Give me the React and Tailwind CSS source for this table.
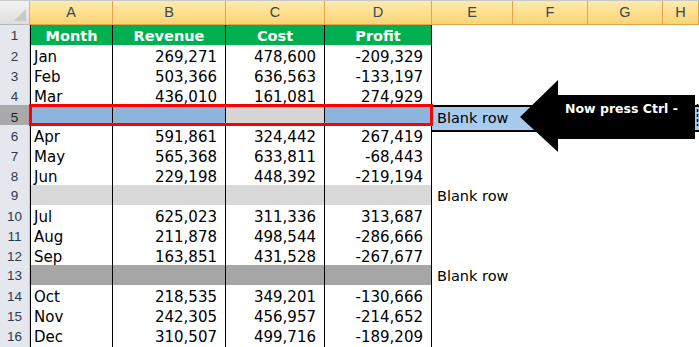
import React from "react";

const grid = "grid grid-cols-[30px_83px_113px_99px_107px_81px_75px_75px_1fr]";

const rows = [
  { n: 2, m: "Jan", r: "269,271", c: "478,600", p: "-209,329" },
  { n: 3, m: "Feb", r: "503,366", c: "636,563", p: "-133,197" },
  { n: 4, m: "Mar", r: "436,010", c: "161,081", p: "274,929" },
  { n: 5, kind: "sel" },
  { n: 6, m: "Apr", r: "591,861", c: "324,442", p: "267,419" },
  { n: 7, m: "May", r: "565,368", c: "633,811", p: "-68,443" },
  { n: 8, m: "Jun", r: "229,198", c: "448,392", p: "-219,194" },
  { n: 9, kind: "gray" },
  { n: 10, m: "Jul", r: "625,023", c: "311,336", p: "313,687" },
  { n: 11, m: "Aug", r: "211,878", c: "498,544", p: "-286,666" },
  { n: 12, m: "Sep", r: "163,851", c: "431,528", p: "-267,677" },
  { n: 13, kind: "dark" },
  { n: 14, m: "Oct", r: "218,535", c: "349,201", p: "-130,666" },
  { n: 15, m: "Nov", r: "242,305", c: "456,957", p: "-214,652" },
  { n: 16, m: "Dec", r: "310,507", c: "499,716", p: "-189,209" },
];

const letters = ["A", "B", "C", "D", "E", "F", "G", "H"];

function RowHead({ n, selected }) {
  return (
    <div
      className={
        "flex items-center justify-center border-b border-r font-['Liberation_Sans',sans-serif] text-[13.5px] " +
        (selected
          ? "bg-[#a9a9a9] border-[#8c8c8c] text-[#1f1f1f]"
          : "bg-[#e4e8ee] border-[#c3cad4] text-[#2e3a4c]")
      }
    >
      {n}
    </div>
  );
}

function Cell({ children, bg = "bg-white", align = "text", first }) {
  return (
    <div
      className={
        "flex items-center border-b border-r border-black pt-px " +
        (first ? "border-l " : "") +
        bg +
        (align === "num" ? " justify-end pr-[8px]" : " pl-[3px]")
      }
    >
      {children}
    </div>
  );
}

function BlankRow({ n, bg }) {
  return (
    <div className={grid + " h-5"}>
      <RowHead n={n} />
      <Cell bg={bg} first />
      <Cell bg={bg} />
      <Cell bg={bg} />
      <Cell bg={bg} />
      <div className="col-span-4 flex items-center pl-[5px] pt-px text-[14.5px]">Blank row</div>
    </div>
  );
}

export default function App() {
  return (
    <div className="relative w-[699px] h-[347px] overflow-hidden bg-white font-['DejaVu_Sans',Verdana,sans-serif] text-[15px] text-black">
      {/* column letters */}
      <div className={grid + " h-[25px] border-t border-[#c9c9c9]"}>
        <div className="relative border-r border-b border-[#b8b8b8] bg-gradient-to-b from-[#f3f3f3] to-[#dedede]">
          <svg className="absolute right-[3px] bottom-[3px]" width="12" height="12" viewBox="0 0 12 12">
            <polygon points="12,0 12,12 0,12" fill="#c9c9c9" />
          </svg>
        </div>
        {letters.map((l) => (
          <div
            key={l}
            className="flex items-center justify-center border-r border-b border-[#e2a54c] bg-gradient-to-b from-[#fdeab0] via-[#fde08f] to-[#f9d472] font-['Liberation_Sans',sans-serif] text-[14.5px] text-[#37465a]"
          >
            {l}
          </div>
        ))}
      </div>

      {/* header row */}
      <div className={grid + " h-5"}>
        <RowHead n={1} />
        {["Month", "Revenue", "Cost", "Profit"].map((h, i) => (
          <div
            key={h}
            className={
              "flex items-center justify-center border-b border-r border-black bg-[#00b050] pt-px text-[14.5px] font-bold text-white " +
              (i === 0 ? "border-l" : "")
            }
          >
            {h}
          </div>
        ))}
        <div className="col-span-4" />
      </div>

      {rows.map((r) => {
        if (r.kind === "sel") {
          return (
            <div key={r.n} className={grid + " h-5"}>
              <RowHead n={r.n} selected />
              <Cell bg="bg-[#8db4da]" first />
              <Cell bg="bg-[#8db4da]" />
              <Cell bg="bg-[#d6d6d6]" />
              <Cell bg="bg-[#8db4da]" />
              <div className="col-span-4 flex items-center border-y-2 border-black bg-[#a6cbef] pl-[5px] pt-px text-[14.5px]">
                Blank row
              </div>
            </div>
          );
        }
        if (r.kind === "gray") return <BlankRow key={r.n} n={r.n} bg="bg-[#d9d9d9]" />;
        if (r.kind === "dark") return <BlankRow key={r.n} n={r.n} bg="bg-[#a6a6a6]" />;
        return (
          <div key={r.n} className={grid + " h-5"}>
            <RowHead n={r.n} />
            <Cell first>{r.m}</Cell>
            <Cell align="num">{r.r}</Cell>
            <Cell align="num">{r.c}</Cell>
            <Cell align="num">{r.p}</Cell>
            <div className="col-span-4" />
          </div>
        );
      })}
      <div className="h-[2px] w-[30px] bg-[#e4e8ee]" />

      {/* red selection box */}
      <div className="absolute left-[29px] top-[104px] h-[22px] w-[404px] border-[3px] border-[#ff0000]" />

      {/* arrow callout */}
      <svg className="absolute left-0 top-0" width="699" height="347" viewBox="0 0 699 347">
        <polygon points="520,117 558,80 558,95 695,95 695,139 558,139 558,152" fill="#000" />
        <line x1="697.5" y1="104" x2="697.5" y2="126" stroke="#000" strokeWidth="1.5" strokeDasharray="3 2" />
      </svg>
      <div className="absolute left-[565px] top-[100px] text-[12.5px] font-bold text-white">Now press Ctrl -</div>
    </div>
  );
}
